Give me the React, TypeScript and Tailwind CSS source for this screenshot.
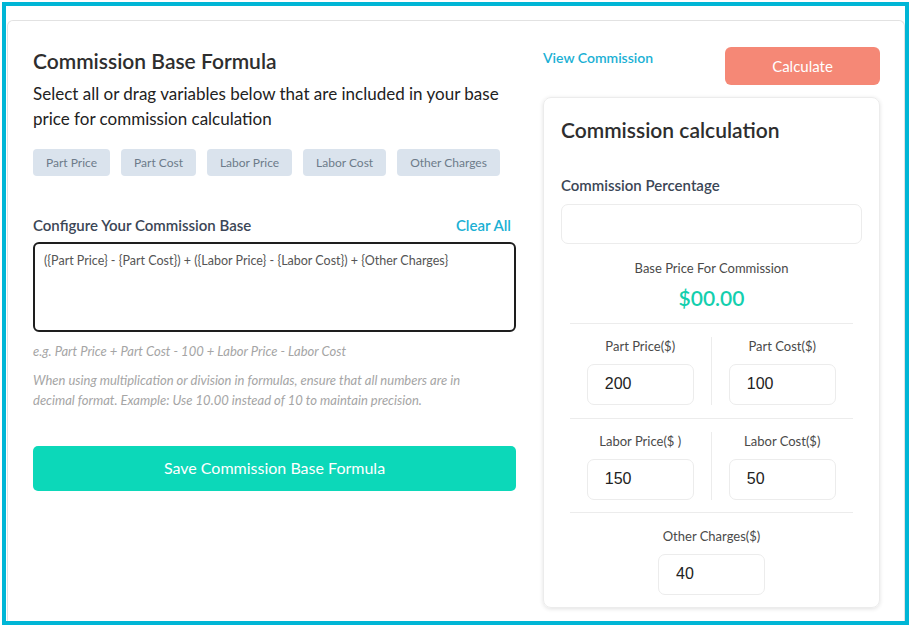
import React from "react";

const chips = ["Part Price", "Part Cost", "Labor Price", "Labor Cost", "Other Charges"];

function NumField({ label, value }: { label: string; value: string }) {
  return (
    <div className="flex flex-col items-center">
      <div className="text-[13px] text-[#4a4a4a] leading-[18px]">{label}</div>
      <div className="mt-[9px] w-[107px] h-[41px] rounded-[7px] border border-[#ececec] flex items-center pl-[17px] text-[16px] text-[#222] font-['Liberation_Sans',Arial,sans-serif]">
        {value}
      </div>
    </div>
  );
}

export default function App() {
  return (
    <div className="w-[911px] h-[627px] p-[2px] bg-white font-['Lato',sans-serif]">
      <div className="w-full h-full border-4 border-[#00b6d6] pt-[14px] pl-[1px] overflow-hidden">
        <div className="h-full border-t border-r border-l border-[#e2e2e2] rounded-tl-[6px] rounded-tr-[6px] flex pl-[25px] pt-[27px]">
          {/* left column */}
          <div className="w-[483px] flex flex-col">
            <h1 className="text-[21px] font-semibold text-[#2e2e2e] leading-[26px]">Commission Base Formula</h1>
            <p className="mt-[7px] text-[17px] text-[#222] leading-[25px]">
              Select all or drag variables below that are included in your base price for commission calculation
            </p>
            <div className="mt-[18px] flex gap-[11px]">
              {chips.map((c) => (
                <div key={c} className="shrink-0 whitespace-nowrap h-[27px] px-[13px] rounded-[4px] bg-[#dae3ed] text-[12px] text-[#6d7b8a] flex items-center">
                  {c}
                </div>
              ))}
            </div>
            <div className="mt-[38px] flex justify-between items-center">
              <div className="text-[15px] font-semibold text-[#3b4656]">Configure Your Commission Base</div>
              <div className="text-[15px] font-semibold text-[#1bb0d4] mr-[5px]">Clear All</div>
            </div>
            <div className="mt-[5px] h-[90px] border-2 border-[#1e1e1e] rounded-[6px] px-[9px] pt-[8px] text-[12.5px] text-[#555]">
              ({"{"}Part Price{"}"} - {"{"}Part Cost{"}"}) + ({"{"}Labor Price{"}"} - {"{"}Labor Cost{"}"}) + {"{"}Other Charges{"}"}
            </div>
            <div className="mt-[9px] text-[13px] italic text-[#a5a5a5] leading-[20px]">
              e.g. Part Price + Part Cost - 100 + Labor Price - Labor Cost
            </div>
            <div className="mt-[9px] w-[465px] text-[13px] italic text-[#a5a5a5] leading-[20px]">
              When using multiplication or division in formulas, ensure that all numbers are in decimal format. Example: Use 10.00 instead of 10 to maintain precision.
            </div>
            <button className="mt-[36px] h-[45px] w-full rounded-[5px] bg-[#0cd8b9] text-white text-[16px]">
              Save Commission Base Formula
            </button>
          </div>
          {/* right column */}
          <div className="ml-[27px] w-[337px] flex flex-col">
            <div className="flex justify-between items-start">
              <div className="text-[14px] font-semibold text-[#1bb0d4] -mt-[1px]">View Commission</div>
              <button className="w-[155px] h-[38px] rounded-[6px] bg-[#f58876] text-white text-[15px] -mt-[1px]">
                Calculate
              </button>
            </div>
            <div className="mt-[12px] h-[511px] rounded-[8px] border border-[#ececec] shadow-[0_1px_4px_rgba(0,0,0,0.12)] px-[17px] pt-[18px]">
              <div className="text-[21px] font-semibold text-[#2e2e2e] leading-[28px]">Commission calculation</div>
              <div className="mt-[30px] text-[15px] font-semibold text-[#3b4656]">Commission Percentage</div>
              <div className="mt-[7px] h-[40px] rounded-[7px] border border-[#ececec]"></div>
              <div className="mt-[15px] text-center text-[13px] text-[#4a4a4a]">Base Price For Commission</div>
              <div className="mt-[4px] text-center text-[21px] font-semibold text-[#13cfae]">$00.00</div>
              <div className="mx-[9px] mt-[9px] border-t border-[#ececec]"></div>
              <div className="mx-[9px] grid grid-cols-2 pt-[13px] pb-[13px] border-b border-[#ececec]">
                <div className="border-r border-[#ececec]"><NumField label="Part Price($)" value="200" /></div>
                <div><NumField label="Part Cost($)" value="100" /></div>
              </div>
              <div className="mx-[9px] grid grid-cols-2 pt-[13px] pb-[12px] border-b border-[#ececec]">
                <div className="border-r border-[#ececec]"><NumField label="Labor Price($ )" value="150" /></div>
                <div><NumField label="Labor Cost($)" value="50" /></div>
              </div>
              <div className="mt-[14px] flex justify-center">
                <NumField label="Other Charges($)" value="40" />
              </div>
            </div>
          </div>
        </div>
      </div>
    </div>
  );
}
